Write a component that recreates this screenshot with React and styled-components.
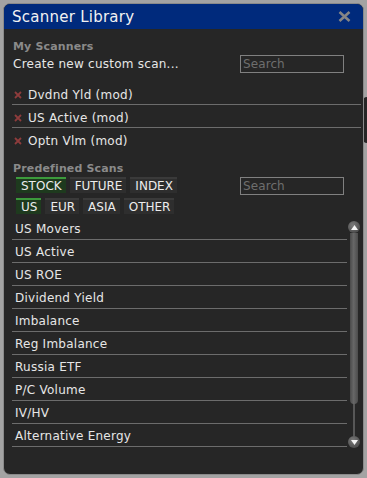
import styled, { createGlobalStyle } from "styled-components";

const GlobalStyle = createGlobalStyle`
  html, body {
    margin: 0;
    padding: 0;
    background: #a3a3a3;
  }
  body {
    font-family: "DejaVu Sans", Verdana, sans-serif;
  }
`;

const Page = styled.div`
  position: relative;
  width: 367px;
  height: 478px;
  padding: 3px;
  box-sizing: border-box;
`;

// piece of another window peeking out from behind on the right
const BehindEdge = styled.div`
  position: absolute;
  right: 0;
  top: 97px;
  width: 4px;
  height: 46px;
  background: #262626;
  border-radius: 4px 0 0 4px;
`;

const Window = styled.div`
  position: relative;
  height: 100%;
  box-sizing: border-box;
  border: 1px solid #8a8a8a;
  border-radius: 7px;
  background: #262626;
  overflow: hidden;
  display: flex;
  flex-direction: column;
`;

const TitleBar = styled.div`
  height: 25px;
  background: #002a7c;
  display: flex;
  align-items: center;
  justify-content: space-between;
  padding: 0 12px 0 8px;
`;

const Title = styled.span`
  color: #f2f2f2;
  font-size: 15px;
  letter-spacing: 0.25px;
`;

const Content = styled.div`
  flex: 1;
  display: flex;
  flex-direction: column;
  padding: 10px 2px 0 8px;
`;

const Heading = styled.div`
  color: #8a8a8a;
  font-size: 11px;
  font-weight: bold;
  line-height: 13px;
  padding-top: 1px;
  letter-spacing: 0.15px;
  padding-left: 1px;
  margin-top: ${(p) => p.$top || 0}px;
`;

const Row = styled.div`
  display: flex;
  align-items: ${(p) => p.$align || "center"};
  justify-content: space-between;
  margin-top: ${(p) => p.$top || 0}px;
`;

const Label = styled.span`
  color: #e6e6e6;
  font-size: 12px;
  letter-spacing: 0.25px;
  padding-left: 1px;
`;

const SearchBox = styled.div`
  width: 100px;
  height: 16px;
  border: 1px solid #808080;
  margin-right: 17px;
  color: #6e6e6e;
  font-size: 12px;
  line-height: 16px;
  padding-left: 2px;
  box-sizing: content-box;
  letter-spacing: 0.1px;
`;

const MyList = styled.div`
  margin-top: 9px;
`;

const MyItem = styled.div`
  display: flex;
  align-items: center;
  gap: 6px;
  height: 23px;
  padding: 3px 0 0 2px;
  box-sizing: border-box;
  border-bottom: 1px solid ${(p) => (p.$last ? "transparent" : "#6c6c6c")};
  color: #e6e6e6;
  font-size: 12px;
  letter-spacing: 0.25px;
`;

const TabGroups = styled.div`
  display: flex;
  flex-direction: column;
  gap: 5px;
  padding-left: 4px;
`;

const TabRow = styled.div`
  display: flex;
  gap: 4px;
`;

const Tab = styled.div`
  height: 14px;
  border-top: 2px solid ${(p) => (p.$active ? "#3c9a3c" : "#3a3a3a")};
  background: ${(p) => (p.$active ? "#1e3a1e" : "#2e2e2e")};
  color: #ececec;
  font-size: 12px;
  line-height: 15px;
  padding: 0 4px 0 5px;
`;

const ListArea = styled.div`
  display: flex;
  margin-top: 3px;
`;

const List = styled.div`
  flex: 1;
`;

const ListItem = styled.div`
  height: 23px;
  padding: 3px 0 0 3px;
  box-sizing: border-box;
  border-bottom: 1px solid #6c6c6c;
  color: #e6e6e6;
  font-size: 12px;
  line-height: 18px;
  letter-spacing: 0.25px;
`;

const ScrollBar = styled.div`
  width: 14px;
  margin-top: 4px;
  height: 227px;
  display: flex;
  flex-direction: column;
  align-items: center;
`;

const ScrollButton = styled.div`
  width: 12px;
  height: 12px;
  border-radius: 50%;
  background: radial-gradient(circle at 40% 35%, #7a7a7a, #505050 70%);
  display: flex;
  align-items: center;
  justify-content: center;
`;

const Track = styled.div`
  flex: 1;
  width: 2px;
  background: #575757;
  display: flex;
  justify-content: center;
`;

const Thumb = styled.div`
  width: 8px;
  height: 171px;
  flex-shrink: 0;
  border-radius: 0 0 4px 4px;
  background: linear-gradient(90deg, #4a4a4a, #676767 45%, #4c4c4c);
`;

const CloseIcon = () => (
  <svg width="13" height="11" viewBox="0 0 13 11">
    <path d="M1.5 1 L11.5 10 M11.5 1 L1.5 10" stroke="#858585" strokeWidth="2.6" />
  </svg>
);

const RemoveIcon = () => (
  <svg width="8" height="8" viewBox="0 0 8 8">
    <path d="M1 1 L7 7 M7 1 L1 7" stroke="#8e3c3c" strokeWidth="1.8" />
  </svg>
);

const Arrow = ({ up }) => (
  <svg width="7" height="5" viewBox="0 0 7 5">
    <path d={up ? "M3.5 0 L7 5 L0 5 Z" : "M0 0 L7 0 L3.5 5 Z"} fill="#f4f4f4" />
  </svg>
);

const myScanners = ["Dvdnd Yld (mod)", "US Active (mod)", "Optn Vlm (mod)"];

const scans = [
  "US Movers",
  "US Active",
  "US ROE",
  "Dividend Yield",
  "Imbalance",
  "Reg Imbalance",
  "Russia ETF",
  "P/C Volume",
  "IV/HV",
  "Alternative Energy",
];

const App = () => {
  return (
    <>
      <GlobalStyle />
      <Page>
        <BehindEdge />
        <Window>
          <TitleBar>
            <Title>Scanner Library</Title>
            <CloseIcon />
          </TitleBar>
          <Content>
            <Heading>My Scanners</Heading>
            <Row $top={2}>
              <Label>Create new custom scan...</Label>
              <SearchBox>Search</SearchBox>
            </Row>
            <MyList>
              {myScanners.map((s, i) => (
                <MyItem key={s} $last={i === myScanners.length - 1}>
                  <RemoveIcon />
                  <span>{s}</span>
                </MyItem>
              ))}
            </MyList>
            <Heading $top={10}>Predefined Scans</Heading>
            <Row $top={2} $align="flex-start">
              <TabGroups>
                <TabRow>
                  <Tab $active>STOCK</Tab>
                  <Tab>FUTURE</Tab>
                  <Tab>INDEX</Tab>
                </TabRow>
                <TabRow>
                  <Tab $active>US</Tab>
                  <Tab>EUR</Tab>
                  <Tab>ASIA</Tab>
                  <Tab>OTHER</Tab>
                </TabRow>
              </TabGroups>
              <SearchBox>Search</SearchBox>
            </Row>
            <ListArea>
              <List>
                {scans.map((s) => (
                  <ListItem key={s}>{s}</ListItem>
                ))}
              </List>
              <ScrollBar>
                <ScrollButton>
                  <Arrow up />
                </ScrollButton>
                <Track>
                  <Thumb />
                </Track>
                <ScrollButton>
                  <Arrow />
                </ScrollButton>
              </ScrollBar>
            </ListArea>
          </Content>
        </Window>
      </Page>
    </>
  );
};

export default App;
